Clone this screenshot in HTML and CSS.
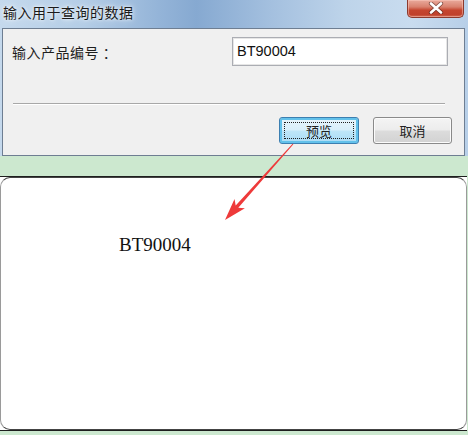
FILE: index.html
```html
<!DOCTYPE html>
<html lang="zh">
<head>
<meta charset="utf-8">
<title>输入用于查询的数据</title>
<link rel="stylesheet" href="styles.css">
</head>
<body>
<div class="window">
  <div class="titlebar">
    <div class="title">输入用于查询的数据</div>
    <div class="close">
      <svg width="18" height="12" viewBox="0 0 18 12">
        <path d="M4 1.5 L14 10.5 M14 1.5 L4 10.5" stroke="#3a1a14" stroke-width="4.2" stroke-linecap="round" opacity="0.55"/>
        <path d="M4 1.5 L14 10.5 M14 1.5 L4 10.5" stroke="#ffffff" stroke-width="2.6" stroke-linecap="round"/>
      </svg>
    </div>
  </div>
  <div class="client">
    <div class="field-row">
      <span class="label">输入产品编号 ：</span>
      <div class="input">BT90004</div>
    </div>
    <div class="separator"></div>
    <div class="buttons">
      <div class="btn btn-default"><span class="focus">预览</span></div>
      <div class="btn">取消</div>
    </div>
  </div>
</div>
<div class="sheet">
  <div class="paper">
    <div class="code">BT90004</div>
  </div>
</div>
<svg class="arrow" width="468" height="435" viewBox="0 0 468 435">
  <polygon points="293.4,144.3 238.3,207.8 244.9,208.3 225,220 234.5,198.9 235.7,205.4 292.6,143.7" fill="#ee3a3a"/>
</svg>
</body>
</html>
```

FILE: styles.css
```css
html, body {
  margin: 0;
  padding: 0;
}
body {
  width: 468px;
  height: 435px;
  background: #cce8cf;
  position: relative;
  overflow: hidden;
  font-family: "Noto Sans CJK SC", "Liberation Sans", sans-serif;
}
.window {
  background: linear-gradient(90deg, #c5d9ed 0%, #b4cde6 18%, #94b4d8 34%, #86a9d1 42%, #a4c0df 58%, #bed4ea 74%, #c9dcef 88%, #b7cfe8 100%);
  padding: 0 3px 0 2px;
}
.titlebar {
  height: 28px;
  display: flex;
  justify-content: space-between;
  align-items: flex-start;
}
.title {
  padding-left: 1px;
  line-height: 25px;
  font-size: 14px;
  letter-spacing: 0.5px;
  color: #1a1a1a;
  text-shadow: 0 0 6px rgba(255,255,255,0.9), 0 0 3px rgba(255,255,255,0.8);
}
.close {
  width: 55px;
  height: 17px;
  margin-right: 1px;
  border: 1px solid #8c3a2e;
  border-top: none;
  border-radius: 0 0 5px 5px;
  background: linear-gradient(180deg, #e9aa9c 0%, #d9826f 40%, #c5452f 60%, #c0412c 85%, #d26a52 100%);
  display: flex;
  align-items: center;
  justify-content: center;
  box-shadow: inset 0 0 0 1px rgba(255,210,200,0.45);
}
.close svg {
  display: block;
  margin-top: -1px;
}
.client {
  height: 128px;
  box-sizing: border-box;
  border: 1px solid #6e7e92;
  background: #f0f0f0;
  padding: 8px 16px 0 9px;
  display: flex;
  flex-direction: column;
}
.field-row {
  display: flex;
  align-items: center;
  justify-content: space-between;
}
.label {
  font-size: 14px;
  letter-spacing: 0.5px;
  color: #1e1e1e;
  white-space: pre;
}
.input {
  width: 216px;
  height: 29px;
  box-sizing: border-box;
  border: 1px solid #abadb3;
  box-shadow: inset 0 0 0 1px #e6e6e6;
  background: #ffffff;
  padding-left: 4px;
  font-family: "Liberation Sans", Arial, sans-serif;
  font-size: 14.5px;
  line-height: 27px;
  color: #111;
}
.separator {
  margin: 37px 3px 0 1px;
  height: 0;
  border-top: 1px solid #a8a8a8;
  border-bottom: 1px solid #ffffff;
}
.buttons {
  margin-top: 12px;
  margin-right: -4px;
  display: flex;
  justify-content: flex-end;
  gap: 14px;
}
.btn {
  width: 79px;
  height: 27px;
  box-sizing: border-box;
  border: 1px solid #8a8a8a;
  border-radius: 3px;
  background: linear-gradient(180deg, #f4f4f4 0%, #ececec 48%, #dcdcdc 52%, #d2d2d2 100%);
  box-shadow: inset 0 0 0 1px #fbfbfb;
  display: flex;
  align-items: center;
  justify-content: center;
  font-size: 13px;
  color: #222;
}
.btn-default {
  width: 80px;
  border: 1px solid #3c7fb1;
  background: linear-gradient(180deg, #e8f5fc 0%, #d9effa 48%, #bee6f8 52%, #a9dbf5 100%);
  box-shadow: inset 0 0 0 2px #63c1ea;
  padding: 4px;
}
.focus {
  flex: 1;
  align-self: stretch;
  border: 1px dotted #202020;
  display: flex;
  align-items: center;
  justify-content: center;
}
.sheet {
  margin-top: 20px;
  width: 467px;
  border-top: 1px solid #1e1e1e;
  border-bottom: 1px solid #1e1e1e;
  background: #ffffff;
}
.paper {
  height: 253px;
  box-sizing: border-box;
  border: 1px solid #9a9a9a;
  border-top-color: #444;
  border-bottom-color: #444;
  border-radius: 10px;
  padding: 56px 0 0 118px;
}
.code {
  font-family: "Liberation Serif", "Times New Roman", serif;
  font-size: 19px;
  line-height: 22px;
  color: #111;
}
.arrow {
  position: absolute;
  left: 0;
  top: 0;
  pointer-events: none;
}
```
